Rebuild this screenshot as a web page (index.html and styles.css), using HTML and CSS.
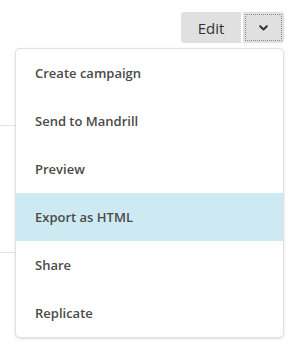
FILE: index.html
```html
<!DOCTYPE html>
<html lang="en">
<head>
    <meta charset="UTF-8">
    <meta name="viewport" content="width=device-width, initial-scale=1.0">
    <title>Campaign actions</title>
    <link rel="stylesheet" href="styles.css">
</head>
<body>
    <div class="page">
        <!-- 背景列表的分隔線 -->
        <div class="rows">
            <div class="row"></div>
            <div class="row row-last"></div>
        </div>
        <div class="toolbar">
            <div class="btn-group">
                <button class="btn edit-btn">Edit</button>
                <button class="btn toggle-btn" aria-label="More actions">
                    <span class="toggle-focus">
                        <svg width="9" height="6" viewBox="0 0 9 6">
                            <path d="M1.2 1.2l3.3 3.3 3.3-3.3" fill="none" stroke="#333" stroke-width="2" stroke-linecap="round" stroke-linejoin="round"/>
                        </svg>
                    </span>
                </button>
            </div>
        </div>
        <ul class="menu">
            <li class="menu-item">Create campaign</li>
            <li class="menu-item">Send to Mandrill</li>
            <li class="menu-item">Preview</li>
            <li class="menu-item active">Export as HTML</li>
            <li class="menu-item">Share</li>
            <li class="menu-item">Replicate</li>
        </ul>
    </div>
</body>
</html>
```

FILE: styles.css
```css
* {
    margin: 0;
    padding: 0;
    box-sizing: border-box;
}
body {
    font-family: 'Open Sans', 'Liberation Sans', sans-serif;
    background: #fff;
    width: 298px;
    height: 357px;
    overflow: hidden;
}
.page {
    position: relative;
    height: 100%;
}
.rows {
    padding-top: 125px;
    width: 60px;
}
.row {
    height: 127px;
    border-top: 1px solid #e3e3e3;
}
.row-last {
    height: 60px;
}
.toolbar {
    position: absolute;
    top: 12px;
    right: 14px;
    display: flex;
}
.btn-group {
    display: flex;
    gap: 2px;
}
.btn {
    height: 31px;
    border: none;
    background: #e0e0e0;
    color: #333;
    font-family: inherit;
    font-size: 15px;
    cursor: pointer;
}
.edit-btn {
    width: 60px;
    border-radius: 3px 0 0 3px;
}
.toggle-btn {
    width: 41px;
    border-radius: 0 3px 3px 0;
    padding: 2px;
}
.toggle-focus {
    display: flex;
    align-items: center;
    justify-content: center;
    width: 100%;
    height: 100%;
    border: 1px dotted #8a8a8a;
}
.menu {
    position: absolute;
    top: 48px;
    left: 15px;
    width: 269px;
    list-style: none;
    background: #fff;
    border: 1px solid #e0e0e0;
    border-radius: 5px;
    box-shadow: 0 1px 3px rgba(0, 0, 0, 0.12);
    overflow: hidden;
}
.menu-item {
    height: 48px;
    line-height: 48px;
    padding-left: 19px;
    font-size: 13px;
    font-weight: 600;
    color: #4a4a4a;
}
.menu-item.active {
    background: #cdeaf2;
}
```
